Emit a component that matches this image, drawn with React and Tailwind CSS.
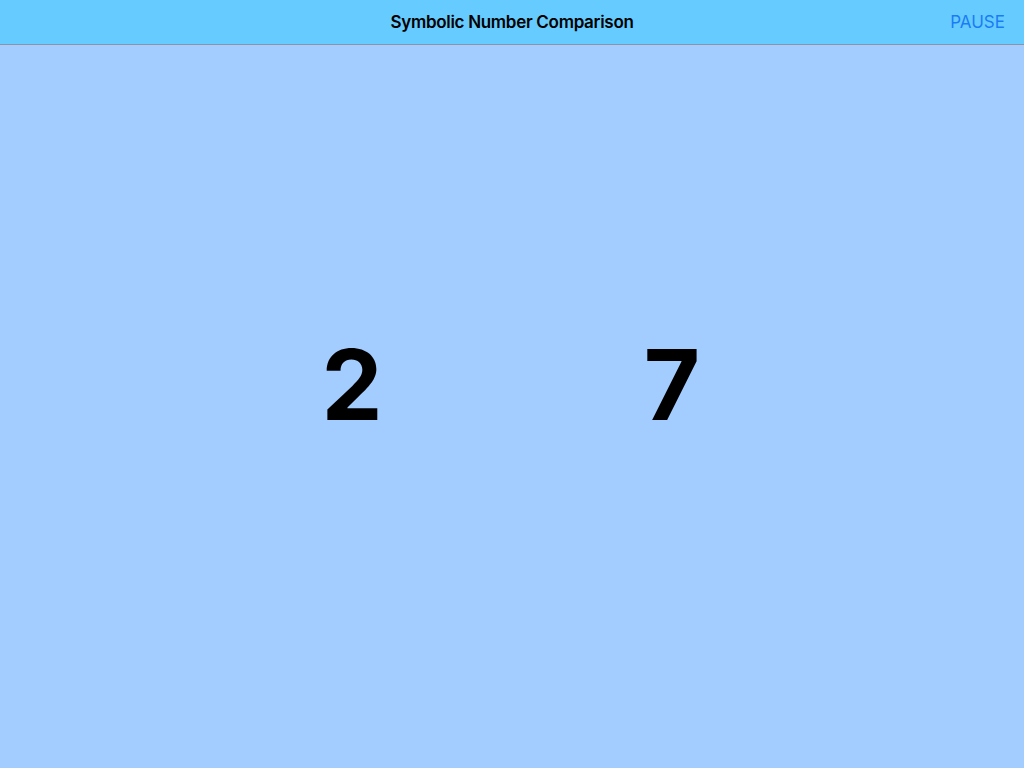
import React from "react";

export default function App() {
    return (
        <div className="w-[1024px] h-[768px] flex flex-col bg-[#a3ccff] font-['Inter',sans-serif] overflow-hidden">
            {/* BARRA SUPERIOR */}
            <div className="relative h-[45px] shrink-0 bg-[#66ccff] border-b border-[#8a94a6] flex items-center justify-center pt-[2px]">
                <span className="text-[17px] font-semibold text-black tracking-[-0.3px]">Symbolic Number Comparison</span>
                <button className="absolute right-[19px] top-0 h-full pt-[2px] text-[17px] text-[#1a7cf5]">PAUSE</button>
            </div>

            {/* NUMEROS */}
            <div className="flex-1 flex items-center justify-center pb-[44px]">
                {['2', '7'].map((n) => (
                    <div key={n} className="w-[320px] flex justify-center">
                        <span className="text-[97px] leading-none font-bold text-black">{n}</span>
                    </div>
                ))}
            </div>
        </div>
    );
}
